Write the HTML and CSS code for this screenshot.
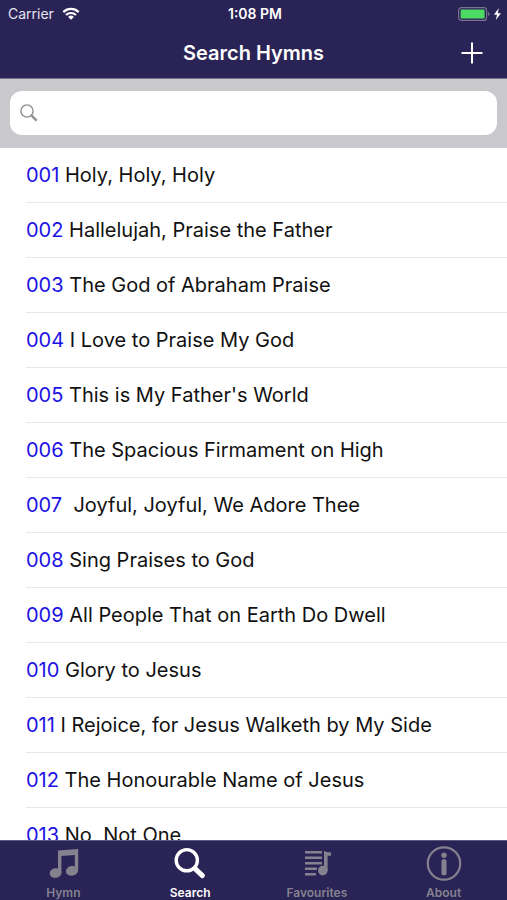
FILE: index.html
```html
<!DOCTYPE html>
<html lang="en">
<head>
<meta charset="utf-8">
<meta name="viewport" content="width=device-width, initial-scale=1">
<title>Search Hymns</title>
<link rel="stylesheet" href="styles.css">
</head>
<body>
<header class="top">
  <div class="status">
    <div class="status-left">
      <span>Carrier</span>
      <svg class="wifi" width="18" height="13" viewBox="0 0 18 13" aria-hidden="true">
        <path d="M1.3 5.1a11 11 0 0 1 15.4 0M4 8a7.2 7.2 0 0 1 10 0" fill="none" stroke="currentColor" stroke-width="2.2"/>
        <path d="M9 12.8 6.1 9.9a4.2 4.2 0 0 1 5.8 0z" fill="currentColor"/>
      </svg>
    </div>
    <span class="time">1:08 PM</span>
    <div class="status-right">
      <svg width="44" height="14" viewBox="0 0 44 14" aria-hidden="true">
        <rect x="0.6" y="0.6" width="28" height="12.8" rx="3" fill="none" stroke="#77748e" stroke-width="1.2"/>
        <rect x="2.6" y="2.6" width="24" height="8.8" rx="1.2" fill="#4cdc64"/>
        <path d="M30 5v4q1.6-.6 1.6-2T30 5z" fill="#77748e"/>
        <path d="M40.8 1 36 7.7h3L37.8 13 43 6.2h-3.2z" fill="#fff"/>
      </svg>
    </div>
  </div>
  <div class="nav">
    <h1 class="title">Search Hymns</h1>
    <button class="add" type="button" aria-label="Add">
      <svg width="22" height="22" viewBox="0 0 22 22" aria-hidden="true"><path d="M11 0.5v21M0.5 11h21" stroke="currentColor" stroke-width="2"/></svg>
    </button>
  </div>
</header>
<form class="search">
  <label class="field">
    <svg width="18" height="18" viewBox="0 0 18 18" aria-hidden="true"><circle cx="7" cy="7" r="6.1" fill="none" stroke="currentColor" stroke-width="1.4"/><path d="m11.6 11.6 5 5" stroke="currentColor" stroke-width="2.2"/></svg>
    <input class="input" type="search" aria-label="Search hymns">
  </label>
</form>
<main class="content">
  <ul class="hymns">
    <li class="hymn"><span class="number">001</span> Holy, Holy, Holy</li>
    <li class="hymn"><span class="number">002</span> Hallelujah, Praise the Father</li>
    <li class="hymn"><span class="number">003</span> The God of Abraham Praise</li>
    <li class="hymn"><span class="number">004</span> I Love to Praise My God</li>
    <li class="hymn"><span class="number">005</span> This is My Father's World</li>
    <li class="hymn"><span class="number">006</span> The Spacious Firmament on High</li>
    <li class="hymn"><span class="number">007</span>  Joyful, Joyful, We Adore Thee</li>
    <li class="hymn"><span class="number">008</span> Sing Praises to God</li>
    <li class="hymn"><span class="number">009</span> All People That on Earth Do Dwell</li>
    <li class="hymn"><span class="number">010</span> Glory to Jesus</li>
    <li class="hymn"><span class="number">011</span> I Rejoice, for Jesus Walketh by My Side</li>
    <li class="hymn"><span class="number">012</span> The Honourable Name of Jesus</li>
    <li class="hymn"><span class="number">013</span> No, Not One</li>
  </ul>
</main>
<nav class="tabs">
  <a class="tab" href="#hymn">
    <svg width="36" height="36" viewBox="0 0 36 36" aria-hidden="true">
      <path d="M13 5.4 33.2 4v20.5h-3.4V10L16.4 11v16.5H13z" fill="currentColor"/>
      <ellipse cx="10.6" cy="28" rx="6" ry="4.8" transform="rotate(-12 10.6 28)" fill="currentColor"/>
      <ellipse cx="27" cy="25.8" rx="6.2" ry="4.8" transform="rotate(-12 27 25.8)" fill="currentColor"/>
    </svg>
    <span>Hymn</span>
  </a>
  <a class="tab active" href="#search" aria-current="page">
    <svg width="36" height="36" viewBox="0 0 36 36" aria-hidden="true">
      <circle cx="14.8" cy="15.2" r="10.6" fill="none" stroke="currentColor" stroke-width="3.4"/>
      <path d="m23 23.6 7.4 7" stroke="currentColor" stroke-width="5" stroke-linecap="round"/>
    </svg>
    <span>Search</span>
  </a>
  <a class="tab" href="#favourites">
    <svg width="36" height="36" viewBox="0 0 36 36" aria-hidden="true">
      <path d="M6 7.3h17M6 12.8h17M6 18.3h17M6 23.8h12M6 29.3h11" stroke="currentColor" stroke-width="2.4"/>
      <path d="M25 6q2.5 1.5 7 1.4v3.4h-3.4V26H25z" fill="currentColor"/>
      <circle cx="23.8" cy="25.6" r="4.8" fill="currentColor"/>
    </svg>
    <span>Favourites</span>
  </a>
  <a class="tab" href="#about">
    <svg width="36" height="36" viewBox="0 0 36 36" aria-hidden="true">
      <circle cx="18" cy="18.5" r="16.2" fill="none" stroke="currentColor" stroke-width="2.2"/>
      <circle cx="18" cy="10.2" r="2.7" fill="currentColor"/>
      <rect x="15.5" y="14.2" width="5" height="16" rx="1.6" fill="currentColor"/>
    </svg>
    <span>About</span>
  </a>
</nav>
</body>
</html>
```
FILE: styles.css
```css
* {
  box-sizing: border-box;
}

body {
  margin: 0;
  height: 100vh;
  display: flex;
  flex-direction: column;
  overflow: hidden;
  background: #fff;
  color: #111;
  font-family: Inter, "Liberation Sans", sans-serif;
}

.top {
  background: #2a2356;
  color: #fff;
  border-bottom: 1px solid #77728f;
}

.status {
  display: grid;
  grid-template-columns: 1fr auto 1fr;
  align-items: center;
  height: 27px;
  padding: 0 5px 0 8px;
  font-size: 14px;
}

.status-left {
  display: flex;
  align-items: center;
  gap: 8px;
  color: #e6e4f0;
}

.wifi {
  color: #fff;
}

.time {
  font-weight: 600;
}

.status-right {
  display: flex;
  justify-content: flex-end;
}

.nav {
  display: grid;
  grid-template-columns: 1fr auto 1fr;
  align-items: center;
  height: 51px;
  padding: 0 24px;
}

.title {
  grid-column: 2;
  margin: 0;
  font-size: 20px;
  font-weight: 600;
}

.add {
  justify-self: end;
  display: flex;
  padding: 0;
  border: 0;
  background: none;
  color: #fff;
}

.search {
  padding: 12px 10px 13px;
  background: #c9c9cd;
}

.field {
  display: flex;
  align-items: center;
  gap: 8px;
  height: 44px;
  padding: 0 10px;
  border-radius: 12px;
  background: #fff;
  color: #8e8e93;
}

.input {
  flex: 1;
  min-width: 0;
  border: 0;
  outline: 0;
  background: none;
  font: inherit;
  font-size: 20px;
}

.content {
  flex: 1;
  min-height: 0;
  overflow-y: auto;
  scrollbar-width: none;
}

.hymns {
  margin: 0;
  padding: 0 0 0 26px;
  list-style: none;
}

.hymn {
  height: 55px;
  border-bottom: 1px solid #e8e8ea;
  font-size: 20px;
  line-height: 54px;
  white-space: pre;
}

.number {
  color: #1c12e4;
}

.tabs {
  display: flex;
  justify-content: space-around;
  height: 60px;
  border-top: 1px solid #5d5880;
  background: #2a2356;
}

.tab {
  flex: 1;
  display: flex;
  flex-direction: column;
  align-items: center;
  gap: 4px;
  padding-top: 4px;
  color: #85828f;
  font-size: 12px;
  font-weight: 600;
  line-height: 15px;
  text-decoration: none;
}

.active {
  color: #fff;
}
```
